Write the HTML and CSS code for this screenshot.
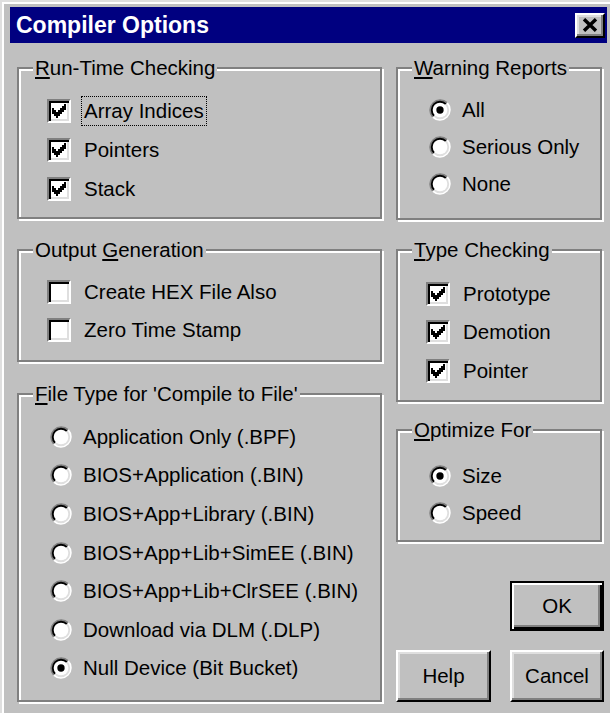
FILE: index.html
```html
<!DOCTYPE html>
<html lang="en">
<head>
<meta charset="utf-8">
<title>Compiler Options</title>
<link rel="stylesheet" href="styles.css">
</head>
<body>
<svg class="defs" aria-hidden="true">
  <symbol id="tick" viewBox="0.5 0.5 8 8">
    <polygon points="1,3 2,3 2,4 3,4 3,5 4,5 4,4 5,4 5,3 6,3 6,2 7,2 7,1 8,1 8,4 7,4 7,5 6,5 6,6 5,6 5,7 4,7 4,8 3,8 3,7 2,7 2,6 1,6" fill="#000"/>
  </symbol>
  <symbol id="radio" viewBox="0 0 12 12">
    <path d="M1.76 10.24A6 6 0 0 1 10.24 1.76Z" fill="#808080"/>
    <path d="M10.24 1.76A6 6 0 0 1 1.76 10.24Z" fill="#fff"/>
    <path d="M2.46 9.54A5 5 0 0 1 9.54 2.46Z" fill="#000"/>
    <path d="M9.54 2.46A5 5 0 0 1 2.46 9.54Z" fill="#dfdfdf"/>
    <circle cx="6" cy="6" r="4" fill="#fff"/>
  </symbol>
  <symbol id="radio-on" viewBox="0 0 12 12">
    <use href="#radio"/>
    <circle cx="6" cy="6" r="2" fill="#000"/>
  </symbol>
</svg>

<div class="window">
  <div class="titlebar">
    <span class="title">Compiler Options</span>
    <span class="close"><svg viewBox="0 0 8 7"><path d="M1 .6 7 6.4M7 .6 1 6.4"/></svg></span>
  </div>

  <div class="client">
    <div class="col col-left">
      <section class="group g-runtime">
        <div class="legend"><u>R</u>un-Time Checking</div>
        <div class="opts">
          <div class="opt"><span class="check"><svg><use href="#tick"/></svg></span><span class="lbl focus">Array Indices</span></div>
          <div class="opt"><span class="check"><svg><use href="#tick"/></svg></span><span class="lbl">Pointers</span></div>
          <div class="opt"><span class="check"><svg><use href="#tick"/></svg></span><span class="lbl">Stack</span></div>
        </div>
      </section>

      <section class="group g-output">
        <div class="legend">Output <u>G</u>eneration</div>
        <div class="opts">
          <div class="opt"><span class="check"></span><span class="lbl">Create HEX File Also</span></div>
          <div class="opt"><span class="check"></span><span class="lbl">Zero Time Stamp</span></div>
        </div>
      </section>

      <section class="group g-filetype">
        <div class="legend"><u>F</u>ile Type for 'Compile to File'</div>
        <div class="opts">
          <div class="opt"><svg class="radio"><use href="#radio"/></svg><span class="lbl">Application Only (.BPF)</span></div>
          <div class="opt"><svg class="radio"><use href="#radio"/></svg><span class="lbl">BIOS+Application (.BIN)</span></div>
          <div class="opt"><svg class="radio"><use href="#radio"/></svg><span class="lbl">BIOS+App+Library (.BIN)</span></div>
          <div class="opt"><svg class="radio"><use href="#radio"/></svg><span class="lbl">BIOS+App+Lib+SimEE (.BIN)</span></div>
          <div class="opt"><svg class="radio"><use href="#radio"/></svg><span class="lbl">BIOS+App+Lib+ClrSEE (.BIN)</span></div>
          <div class="opt"><svg class="radio"><use href="#radio"/></svg><span class="lbl">Download via DLM (.DLP)</span></div>
          <div class="opt"><svg class="radio"><use href="#radio-on"/></svg><span class="lbl">Null Device (Bit Bucket)</span></div>
        </div>
      </section>
    </div>

    <div class="col col-right">
      <section class="group g-warning">
        <div class="legend"><u>W</u>arning Reports</div>
        <div class="opts">
          <div class="opt"><svg class="radio"><use href="#radio-on"/></svg><span class="lbl">All</span></div>
          <div class="opt"><svg class="radio"><use href="#radio"/></svg><span class="lbl">Serious Only</span></div>
          <div class="opt"><svg class="radio"><use href="#radio"/></svg><span class="lbl">None</span></div>
        </div>
      </section>

      <section class="group g-type">
        <div class="legend"><u>T</u>ype Checking</div>
        <div class="opts">
          <div class="opt"><span class="check"><svg><use href="#tick"/></svg></span><span class="lbl">Prototype</span></div>
          <div class="opt"><span class="check"><svg><use href="#tick"/></svg></span><span class="lbl">Demotion</span></div>
          <div class="opt"><span class="check"><svg><use href="#tick"/></svg></span><span class="lbl">Pointer</span></div>
        </div>
      </section>

      <section class="group g-optimize">
        <div class="legend"><u>O</u>ptimize For</div>
        <div class="opts">
          <div class="opt"><svg class="radio"><use href="#radio-on"/></svg><span class="lbl">Size</span></div>
          <div class="opt"><svg class="radio"><use href="#radio"/></svg><span class="lbl">Speed</span></div>
        </div>
      </section>

      <div class="ok-row"><button class="btn btn-default">OK</button></div>
      <div class="btn-row">
        <button class="btn btn-help">Help</button>
        <button class="btn">Cancel</button>
      </div>
    </div>
  </div>
</div>
</body>
</html>
```

FILE: styles.css
```css
* { box-sizing: border-box; }

html, body { margin: 0; padding: 0; }

body {
  background: #c0c0c0;
  font-family: "Liberation Sans", Arial, sans-serif;
  font-size: 20.5px;
  color: #000;
}

.defs { position: absolute; width: 0; height: 0; overflow: hidden; }

/* window frame */
.window {
  width: 610px;
  height: 713px;
  overflow: hidden;
  background: #c0c0c0;
  border-top: 2px solid #dfdfdf;
  border-left: 2px solid #dfdfdf;
  box-shadow: inset 2px 2px 0 #fff;
  padding: 5px 3px 0 8px;
}

.titlebar {
  height: 36px;
  background: #000080;
  display: flex;
  align-items: center;
  justify-content: space-between;
  padding: 0 2px 0 6px;
}

.title {
  color: #fff;
  font-weight: bold;
  font-size: 23px;
}

.close {
  width: 30px;
  height: 25px;
  display: flex;
  align-items: center;
  justify-content: center;
  background: #c0c0c0;
  border: 2px solid;
  border-color: #fff #000 #000 #fff;
  box-shadow: inset -2px -2px 0 #808080, inset 2px 2px 0 #dfdfdf;
}

.close svg {
  width: 16px;
  height: 14px;
  fill: none;
  stroke: #000;
  stroke-width: 1.7;
}

/* dialog body */
.client {
  display: flex;
  gap: 14px;
  padding: 24px 0 0 7px;
}

.col-left { width: 365px; }
.col-right { width: 206px; }

/* etched group box */
.group {
  border: 2px solid #808080;
  box-shadow: inset 2px 2px 0 #fff, 2px 2px 0 #fff;
}

.legend {
  width: fit-content;
  margin: -13px 0 0 14px;
  padding: 0 2px;
  line-height: 24px;
  background: #c0c0c0;
  white-space: nowrap;
}

u {
  text-decoration-thickness: 2px;
  text-underline-offset: 2px;
}

.opts { padding-left: 28px; }

.opt {
  display: flex;
  align-items: center;
}

.lbl {
  line-height: 28px;
  padding: 0 2px;
  border: 1px solid transparent;
  white-space: nowrap;
}

.lbl.focus { border: 1px dotted #000; }

.check {
  flex: none;
  width: 24px;
  height: 24px;
  margin-right: 10px;
  background: #fff;
  border: 2px solid;
  border-color: #808080 #fff #fff #808080;
  box-shadow: inset 2px 2px 0 #000, inset -2px -2px 0 #dfdfdf;
  padding: 2px;
}

.check svg {
  display: block;
  width: 16px;
  height: 16px;
}

.radio {
  flex: none;
  width: 22px;
  height: 22px;
  margin: 0 8px 0 3px;
}

/* per-group spacing */
.g-runtime { margin-bottom: 30px; }
.g-runtime .opts { padding-top: 11px; padding-bottom: 9px; }
.g-runtime .opt { height: 39px; }

.g-output { margin-bottom: 31px; }
.g-output .opts { padding-top: 11px; padding-bottom: 11px; }
.g-output .opt { height: 38px; }

.g-filetype .opts { padding-top: 11.5px; padding-bottom: 12.3px; }
.g-filetype .opt { height: 38.6px; }

.g-warning { margin-bottom: 29px; }
.g-warning .opts { padding-top: 11px; padding-bottom: 16px; }
.g-warning .opt { height: 37px; }

.g-type { margin-bottom: 27px; }
.g-type .opts { padding-top: 12.5px; padding-bottom: 10px; }
.g-type .opt { height: 38.5px; }

.g-optimize .opts { padding-top: 15.5px; padding-bottom: 8.5px; }
.g-optimize .opt { height: 37px; }

/* push buttons */
.btn {
  font: inherit;
  color: #000;
  padding: 0;
  width: 94px;
  height: 52px;
  background: #c0c0c0;
  border: 2px solid;
  border-color: #fff #000 #000 #fff;
  box-shadow: inset -2px -2px 0 #808080, inset 2px 2px 0 #dfdfdf;
  display: flex;
  align-items: center;
  justify-content: center;
}

.btn-default {
  height: 50px;
  border-color: #000;
  box-shadow: inset 2px 2px 0 #fff, inset -2px -2px 0 #000, inset -4px -4px 0 #808080;
}

.btn-help { width: 95px; }

.ok-row {
  display: flex;
  justify-content: flex-end;
  margin-top: 39px;
  margin-right: -2px;
}

.btn-row {
  display: flex;
  justify-content: space-between;
  margin-top: 19px;
  margin-right: -2px;
}
```
